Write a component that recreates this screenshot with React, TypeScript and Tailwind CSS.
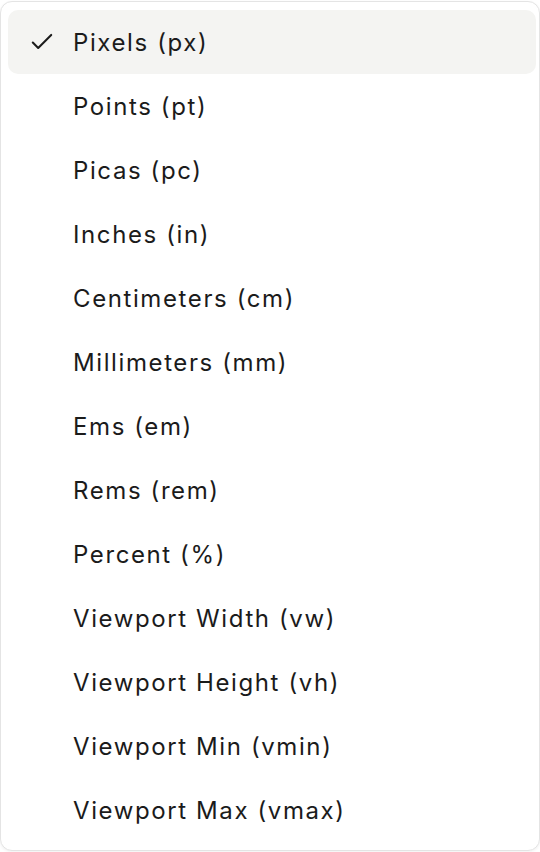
import React from "react";

const items = [
  "Pixels (px)",
  "Points (pt)",
  "Picas (pc)",
  "Inches (in)",
  "Centimeters (cm)",
  "Millimeters (mm)",
  "Ems (em)",
  "Rems (rem)",
  "Percent (%)",
  "Viewport Width (vw)",
  "Viewport Height (vh)",
  "Viewport Min (vmin)",
  "Viewport Max (vmax)",
];

export default function App() {
  return (
    <div className="w-[540px] h-[852px] bg-white pt-[1px]" style={{ fontFamily: "Inter, 'Noto Sans', sans-serif" }}>
      <div className="h-[850px] rounded-[12px] border border-[#e4e4e4] bg-white pt-[8px] pb-[8px] pl-[7px] pr-[3px] shadow-[0_1px_3px_rgba(0,0,0,0.06)]">
        {items.map((label, i) => (
          <div
            key={label}
            className={`flex h-[64px] items-center rounded-[10px] ${i === 0 ? "bg-[#f4f4f2]" : ""}`}
          >
            <div className="flex w-[65px] shrink-0 items-center justify-center pl-[2px]">
              {i === 0 && (
                <svg width="26" height="26" viewBox="0 0 24 24" fill="none" stroke="#1b1b1b" strokeWidth="1.9" strokeLinecap="round" strokeLinejoin="round">
                  <path d="M3.5 12.5l5 5L20.5 5.5" />
                </svg>
              )}
            </div>
            <span className="pt-[2px] text-[24px] leading-none text-[#1b1b1b] tracking-[1.6px]">{label}</span>
          </div>
        ))}
      </div>
    </div>
  );
}
